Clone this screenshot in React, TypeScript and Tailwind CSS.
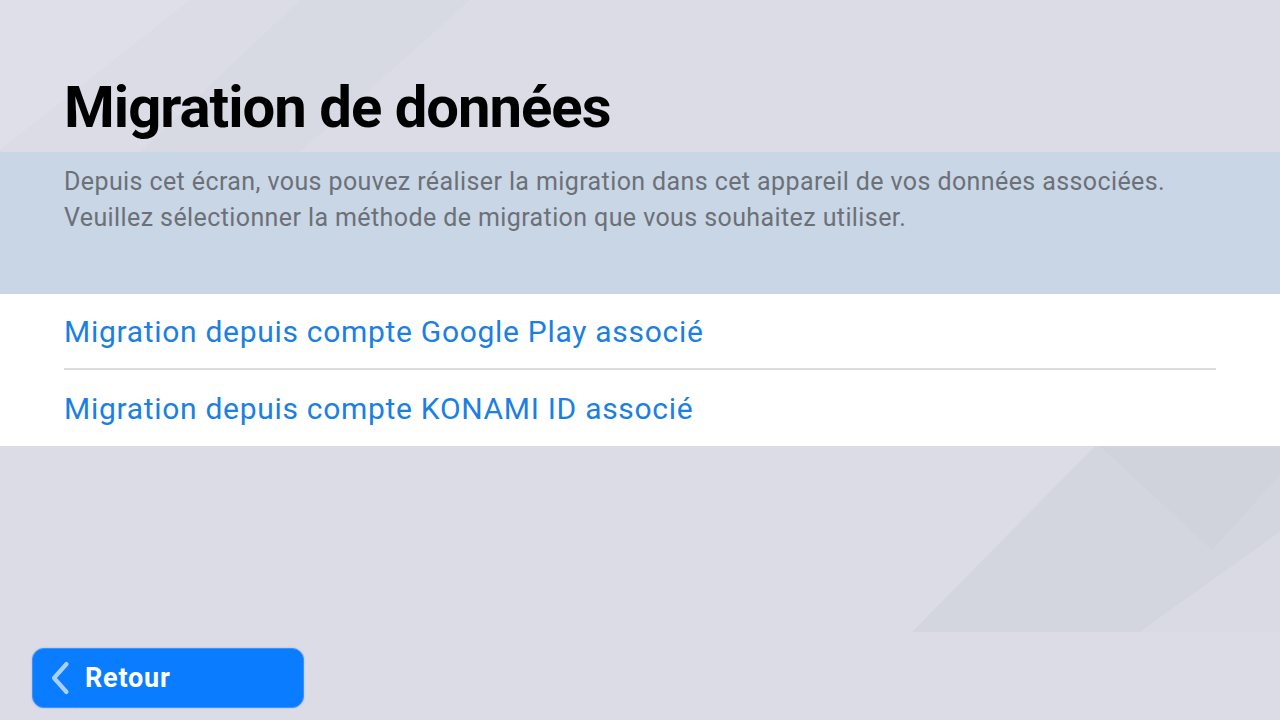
function BackdropShapes() {
  return (
    <svg className="pointer-events-none absolute inset-0 h-full w-full" viewBox="0 0 1280 720" preserveAspectRatio="none">
      {/* faint light stripes, top left */}
      <polygon points="0,0 190,0 0,150" fill="#e2e3ea" opacity="0.45" />
      <polygon points="300,0 470,0 300,152 140,152" fill="#d3d6e0" opacity="0.35" />
      {/* darker slab, bottom right */}
      <polygon points="1095,446 1280,446 1280,532 1140,632 912,632" fill="#d3d5df" />
      <polygon points="1100,446 1280,446 1280,475 1212,550" fill="#d0d2dc" />
      <polygon points="1140,632 1280,532 1280,632" fill="#d9dae4" />
    </svg>
  )
}

function ChevronLeft() {
  return (
    <svg width="20" height="34" viewBox="0 0 20 34" fill="none">
      <path d="M16.5 3 L4 17 L16.5 31" stroke="#a9d0ff" strokeWidth="4.2" strokeLinecap="round" strokeLinejoin="round" />
    </svg>
  )
}

export default function App() {
  return (
    <div className="relative flex h-[720px] w-[1280px] flex-col overflow-hidden bg-[#dbdce5] font-['Roboto',sans-serif]">
      <BackdropShapes />

      {/* Header */}
      <header className="relative h-[152px] px-16 pt-[78px]">
        <h1 className="text-[58px] font-bold leading-none tracking-[-1px] text-black">Migration de données</h1>
      </header>

      {/* Description */}
      <section className="relative h-[142px] bg-[#c9d6e6] px-16 pt-[12px]">
        <p className="text-[25px] leading-[36px] tracking-[0.4px] text-[#6c7077]">
          Depuis cet écran, vous pouvez réaliser la migration dans cet appareil de vos données associées.
          <br />
          Veuillez sélectionner la méthode de migration que vous souhaitez utiliser.
        </p>
      </section>

      {/* Options */}
      <section className="relative bg-white">
        <button className="flex h-[74px] w-full items-center px-16 text-left text-[30px] tracking-[0.7px] text-[#1b80e1]">
          Migration depuis compte Google Play associé
        </button>
        <div className="mx-16 h-[2px] bg-[#dcdcdc]" />
        <button className="flex h-[76px] w-full items-center px-16 text-left text-[30px] tracking-[0.7px] text-[#1b80e1]">
          Migration depuis compte KONAMI ID associé
        </button>
      </section>

      <div className="flex-1" />

      {/* Footer */}
      <footer className="relative px-8 pb-[12px]">
        <button className="flex h-[60px] w-[272px] items-center gap-[15px] rounded-[12px] border border-[#3d92f5] bg-[#0a7cff] pl-[17px] text-white shadow-[0_0_2px_rgba(60,120,220,0.4)]">
          <ChevronLeft />
          <span className="text-[27px] font-bold tracking-[0.8px]">Retour</span>
        </button>
      </footer>
    </div>
  )
}
